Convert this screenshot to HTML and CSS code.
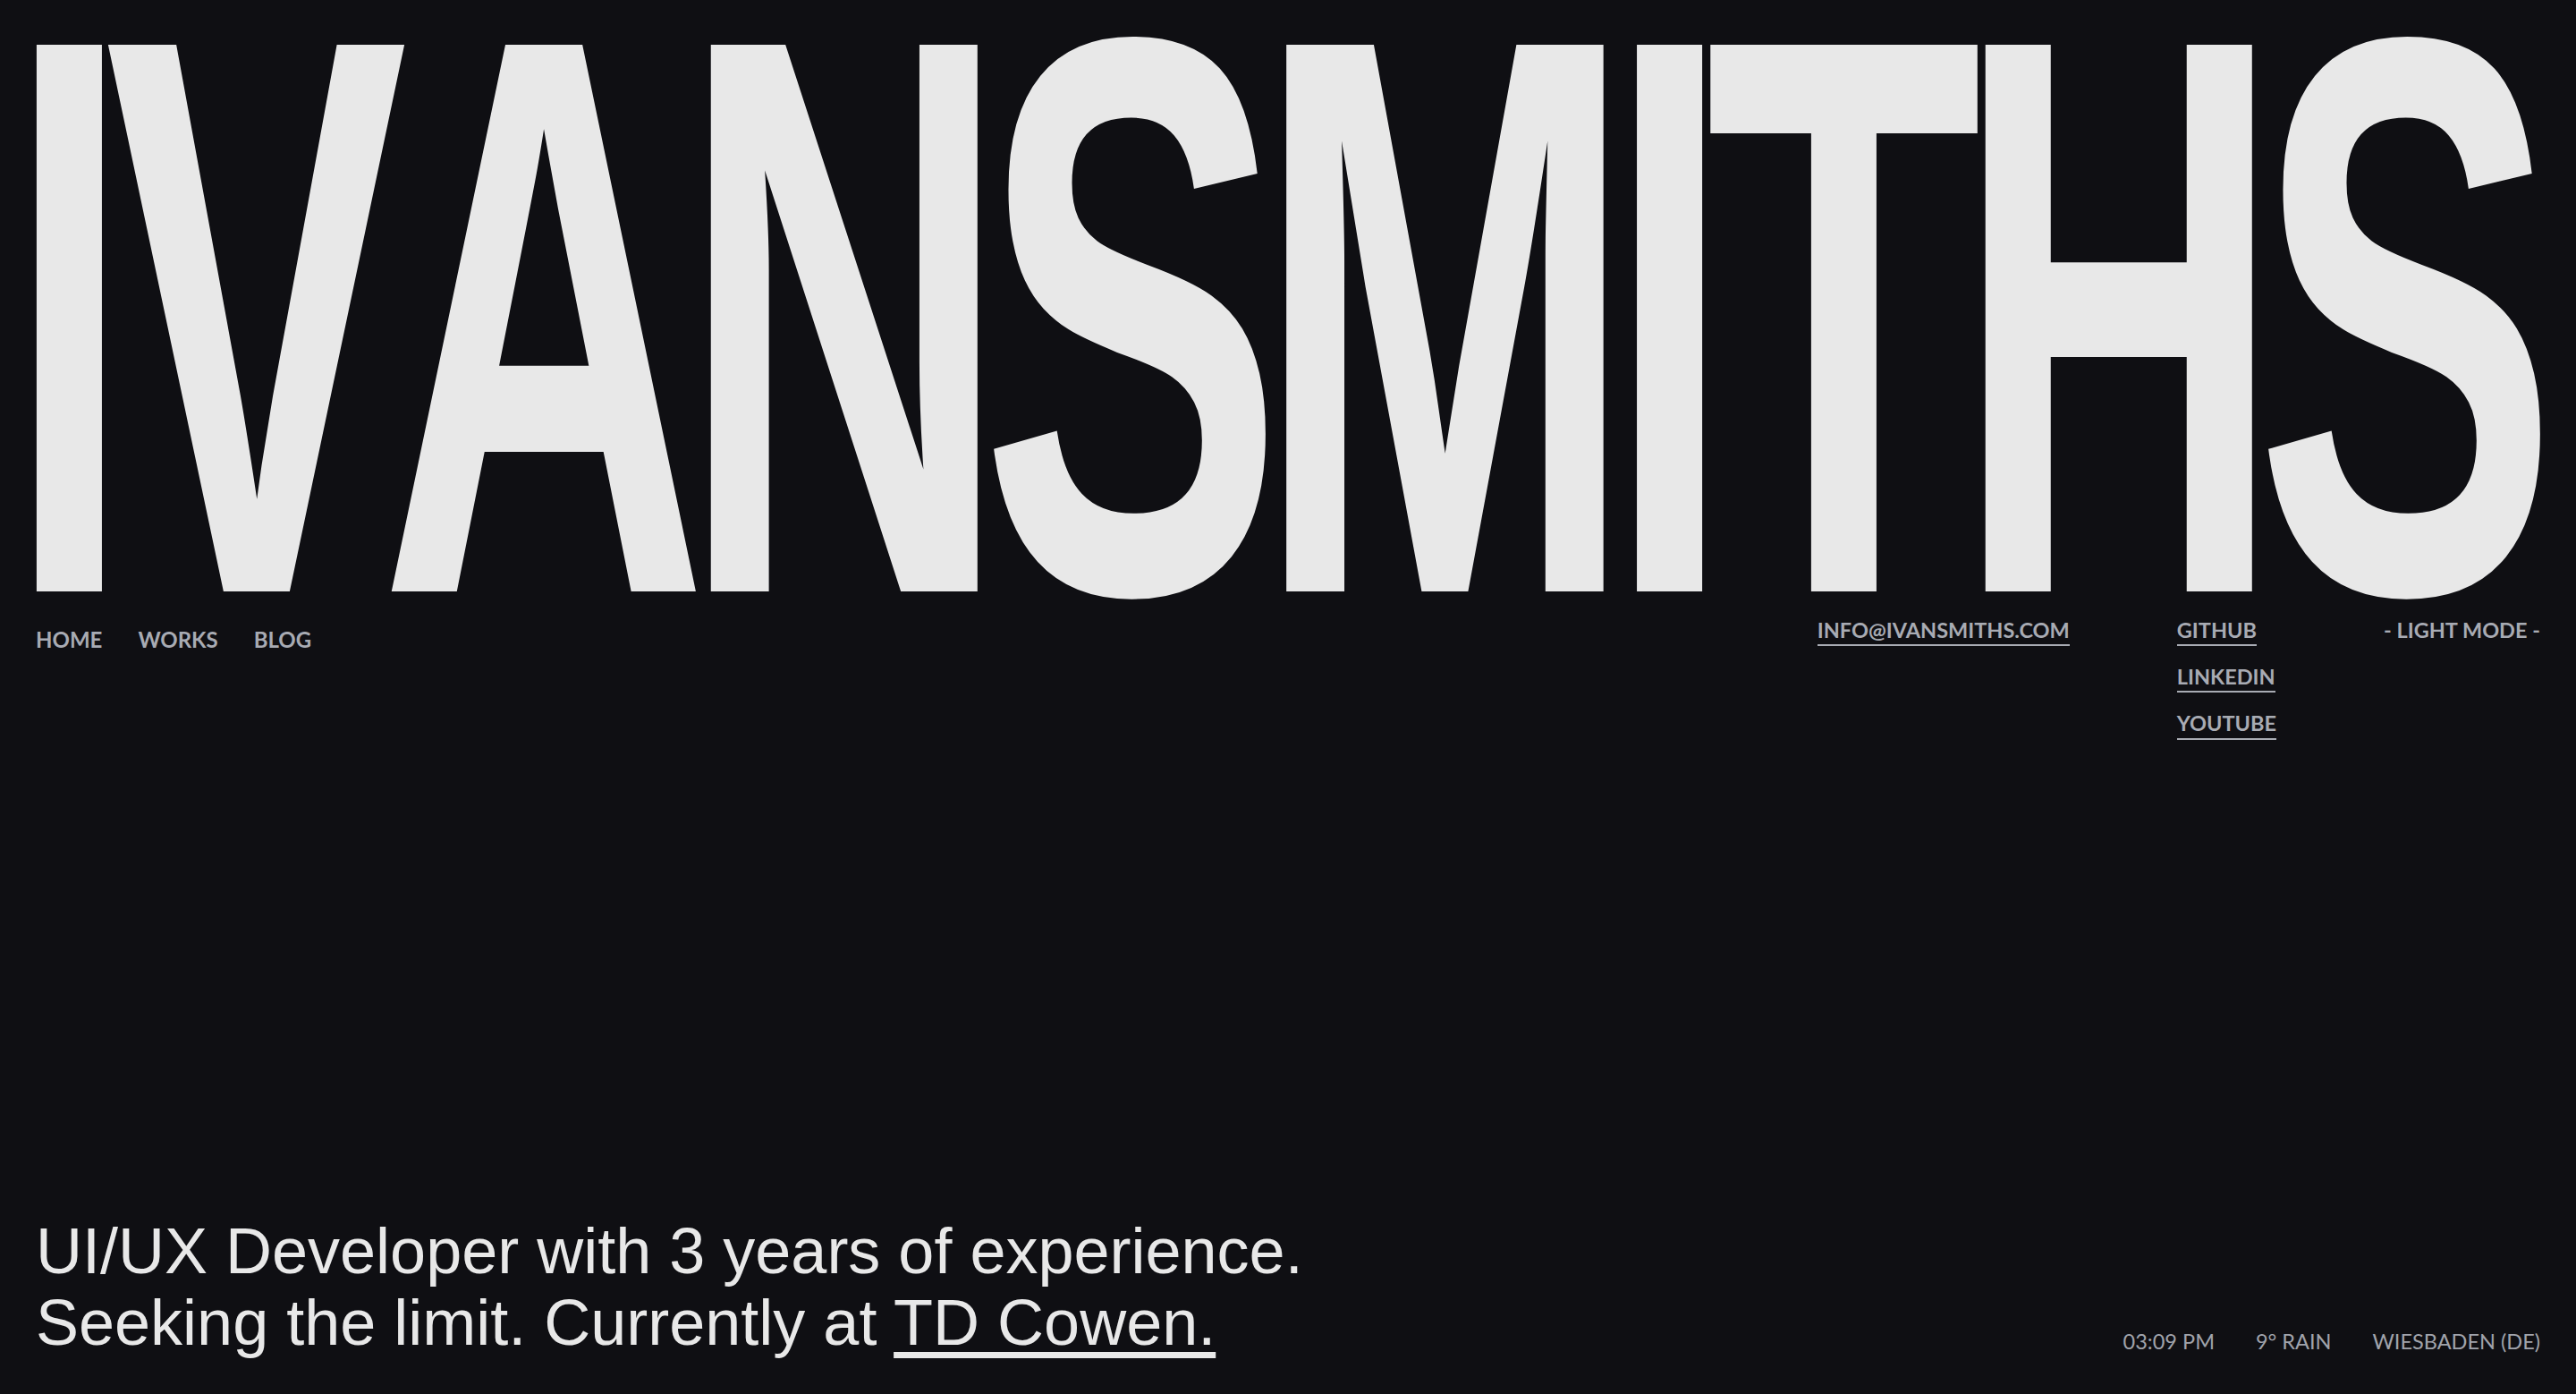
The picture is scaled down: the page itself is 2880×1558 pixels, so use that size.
FILE: index.html
```html
<!DOCTYPE html>
<html lang="en">
<head>
<meta charset="utf-8">
<title>Ivan Smiths</title>
<link rel="stylesheet" href="styles.css">
</head>
<body>
<div class="page">
  <header class="top">
    <h1 class="title"><span class="title-text">IVANSMITHS</span></h1>
    <div class="bar">
      <nav class="nav">
        <a href="#" class="nav-link">HOME</a>
        <a href="#" class="nav-link">WORKS</a>
        <a href="#" class="nav-link">BLOG</a>
      </nav>
      <div class="meta">
        <a href="#" class="link">INFO@IVANSMITHS.COM</a>
        <ul class="social">
          <li><a href="#" class="link">GITHUB</a></li>
          <li><a href="#" class="link">LINKEDIN</a></li>
          <li><a href="#" class="link">YOUTUBE</a></li>
        </ul>
        <button class="mode" type="button">- LIGHT MODE -</button>
      </div>
    </div>
  </header>
  <footer class="bottom">
    <p class="tagline">UI/UX Developer with 3 years of experience.<br>Seeking the limit. Currently at <a href="#" class="tag-link">TD Cowen.</a></p>
    <ul class="status">
      <li>03:09 PM</li>
      <li>9° RAIN</li>
      <li>WIESBADEN (DE)</li>
    </ul>
  </footer>
</div>
</body>
</html>
```
FILE: styles.css
```css
html, body {
  margin: 0;
  padding: 0;
  background: #0f0f13;
}
body {
  font-family: "Lato", "Liberation Sans", sans-serif;
  color: #a8abb3;
}
.page {
  box-sizing: border-box;
  height: 1558px;
  padding: 0 40px 40px;
  display: flex;
  flex-direction: column;
  overflow: hidden;
}
.title {
  margin: 25px 0 9px;
  font-family: "Liberation Sans", Arial, sans-serif;
  font-weight: 700;
  font-size: 888px;
  line-height: 656px;
  letter-spacing: -0.06em;
  font-kerning: none;
  color: #e8e8e8;
  white-space: nowrap;
}
.title-text {
  display: inline-block;
  transform-origin: left center;
  transform: translateX(-33px) scaleX(0.5709);
}
.bar {
  display: flex;
  justify-content: space-between;
  align-items: flex-start;
}
.nav {
  display: flex;
  gap: 40px;
  padding-top: 11px;
}
.nav-link {
  font-size: 24px;
  font-weight: 700;
  line-height: 1.2;
  color: #a8abb3;
  text-decoration: none;
}
.meta {
  display: flex;
  gap: 120px;
  align-items: flex-start;
}
.link {
  display: inline-block;
  font-size: 23.5px;
  font-weight: 700;
  line-height: 1.2;
  color: #a8abb3;
  text-decoration: none;
  padding-bottom: 2px;
  border-bottom: 2px solid #a8abb3;
}
.social {
  list-style: none;
  margin: 0;
  padding: 0;
  display: flex;
  flex-direction: column;
  gap: 20px;
}
.mode {
  background: none;
  border: 0;
  padding: 0;
  font-family: inherit;
  font-size: 23.5px;
  font-weight: 700;
  line-height: 1.2;
  color: #a8abb3;
  cursor: pointer;
}
.bottom {
  margin-top: auto;
  display: flex;
  justify-content: space-between;
  align-items: flex-end;
}
.tagline {
  margin: 0;
  font-family: "Liberation Sans", Arial, sans-serif;
  font-size: 72px;
  line-height: 80px;
  color: #e8e8e8;
}
.tag-link {
  color: #e8e8e8;
  text-decoration: underline;
  text-decoration-thickness: 7px;
  text-underline-offset: 8px;
}
.status {
  list-style: none;
  margin: 0 0 5px;
  padding: 0;
  display: flex;
  gap: 46px;
  font-size: 23.5px;
  font-weight: 400;
  line-height: 1.2;
  color: #a0a3ab;
}
```
